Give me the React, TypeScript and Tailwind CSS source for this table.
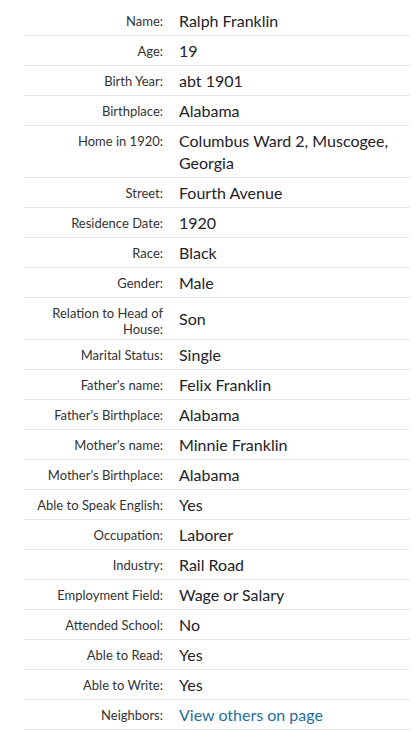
import React from "react";

type Row = { label: string; value: string; link?: boolean };

const rows: Row[] = [
  { label: "Name:", value: "Ralph Franklin" },
  { label: "Age:", value: "19" },
  { label: "Birth Year:", value: "abt 1901" },
  { label: "Birthplace:", value: "Alabama" },
  { label: "Home in 1920:", value: "Columbus Ward 2, Muscogee, Georgia" },
  { label: "Street:", value: "Fourth Avenue" },
  { label: "Residence Date:", value: "1920" },
  { label: "Race:", value: "Black" },
  { label: "Gender:", value: "Male" },
  { label: "Relation to Head of House:", value: "Son" },
  { label: "Marital Status:", value: "Single" },
  { label: "Father's name:", value: "Felix Franklin" },
  { label: "Father's Birthplace:", value: "Alabama" },
  { label: "Mother's name:", value: "Minnie Franklin" },
  { label: "Mother's Birthplace:", value: "Alabama" },
  { label: "Able to Speak English:", value: "Yes" },
  { label: "Occupation:", value: "Laborer" },
  { label: "Industry:", value: "Rail Road" },
  { label: "Employment Field:", value: "Wage or Salary" },
  { label: "Attended School:", value: "No" },
  { label: "Able to Read:", value: "Yes" },
  { label: "Able to Write:", value: "Yes" },
  { label: "Neighbors:", value: "View others on page", link: true },
];

export default function App() {
  return (
    <div
      className="w-[417px] h-[732px] bg-white overflow-hidden pt-[6px] pl-[24px] pr-[7px]"
      style={{ fontFamily: "Lato, 'Liberation Sans', sans-serif" }}
    >
      <div className="flex flex-col">
        {rows.map((r) => (
          <div key={r.label} className="flex border-b border-[#e8e8e8]">
            <div className="w-[147px] shrink-0 self-start px-[8px] pt-[7px] pb-[2px] text-right text-[13px] leading-[16px] text-[#333333]">
              {r.label}
            </div>
            <div
              className={
                "flex-1 self-center px-[8px] pt-[4px] pb-[3px] text-[16px] leading-[22px] " +
                (r.link ? "text-[#1f6f99]" : "text-[#222228]")
              }
            >
              {r.value}
            </div>
          </div>
        ))}
      </div>
    </div>
  );
}
